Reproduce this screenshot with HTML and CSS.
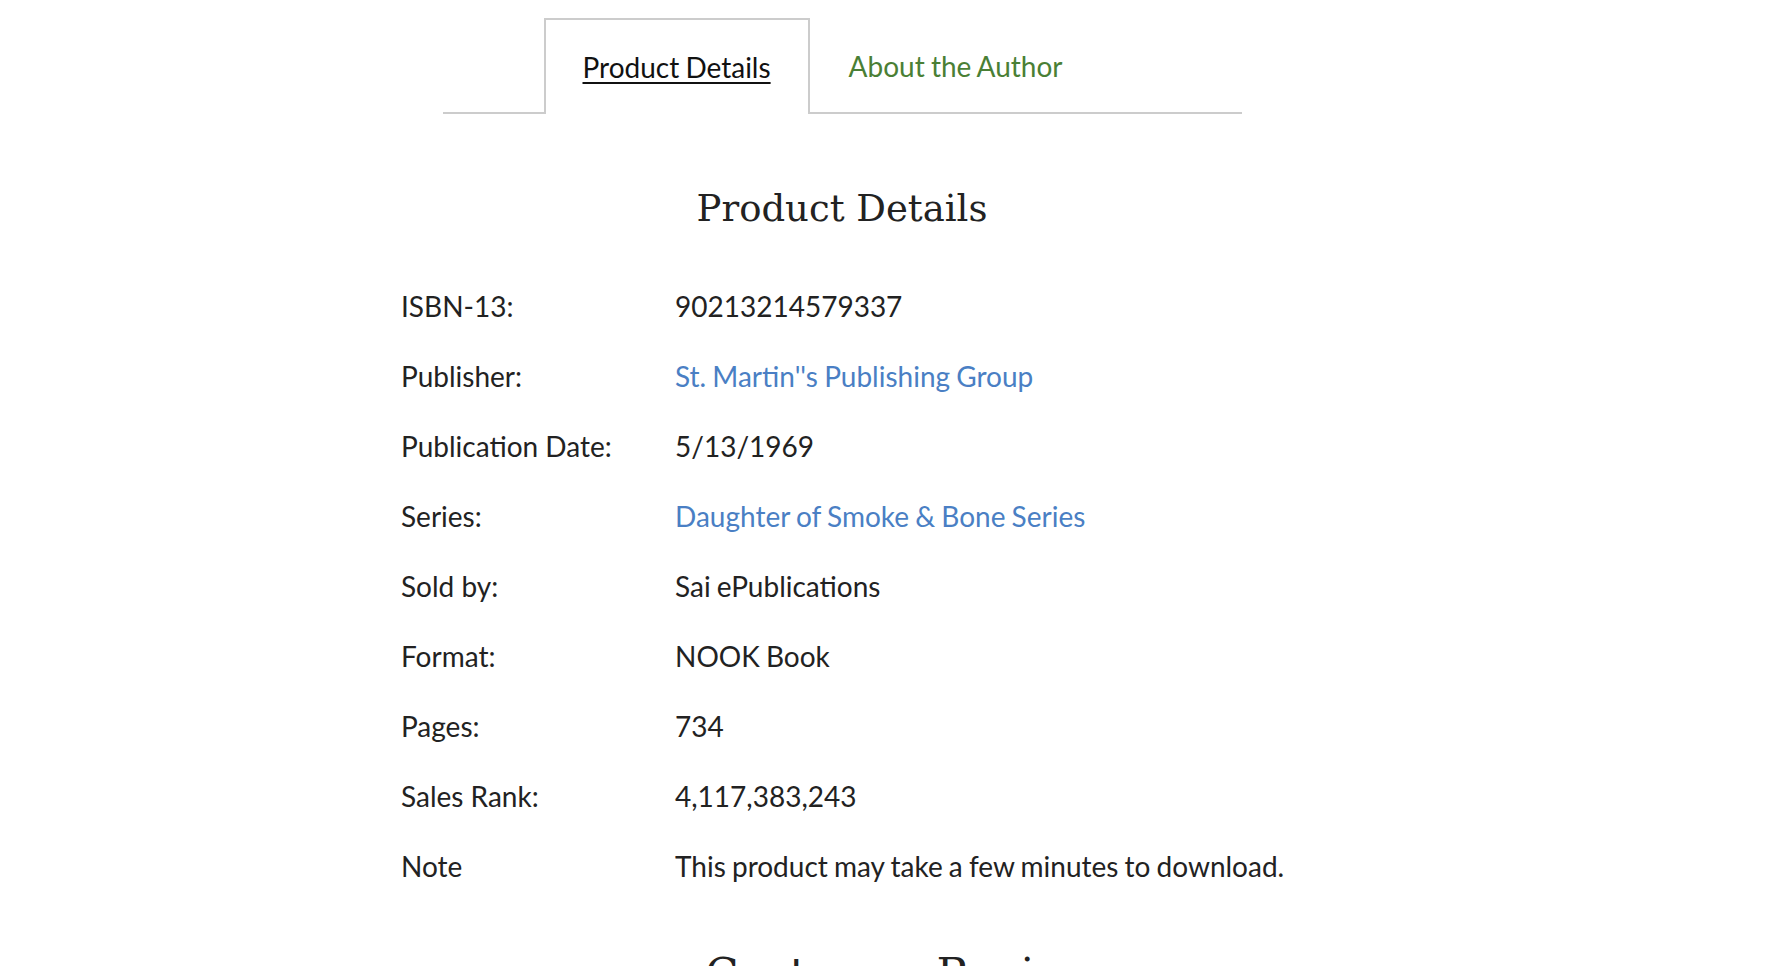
FILE: index.html
```html
<!DOCTYPE html>
<html>
<head>
<meta charset="utf-8">
<link rel="stylesheet" href="styles.css">
</head>
<body>
<div class="page">
  <nav class="tabs">
    <div class="tab-spacer"></div>
    <a class="tab active" href="#">Product Details</a>
    <a class="tab" href="#">About the Author</a>
  </nav>
  <section class="details">
    <h2 class="title">Product Details</h2>
    <dl class="grid">
      <dt>ISBN-13:</dt><dd>90213214579337</dd>
      <dt>Publisher:</dt><dd><a class="link" href="#">St. Martin''s Publishing Group</a></dd>
      <dt>Publication Date:</dt><dd>5/13/1969</dd>
      <dt>Series:</dt><dd><a class="link" href="#">Daughter of Smoke &amp; Bone Series</a></dd>
      <dt>Sold by:</dt><dd>Sai ePublications</dd>
      <dt>Format:</dt><dd>NOOK Book</dd>
      <dt>Pages:</dt><dd>734</dd>
      <dt>Sales Rank:</dt><dd>4,117,383,243</dd>
      <dt>Note</dt><dd>This product may take a few minutes to download.</dd>
    </dl>
    <h2 class="title reviews">Customer Reviews</h2>
  </section>
</div>
</body>
</html>
```
FILE: styles.css
```css
html, body {
  margin: 0;
  padding: 0;
  background: #fff;
}
body {
  font-family: Lato, "Open Sans", sans-serif;
  color: #222;
  overflow: hidden;
  padding-right: 92px;
}
.page {
  width: 882px;
  margin: 0 auto;
}
.tabs {
  display: flex;
  width: 799px;
  margin: 18px auto 0;
  border-bottom: 2px solid #ccc;
  box-sizing: border-box;
  height: 96px;
}
.tab-spacer {
  width: 101px;
}
.tab {
  display: flex;
  align-items: center;
  padding: 0 37px;
  font-size: 28px;
  color: #4a7f35;
  text-decoration: none;
  word-spacing: -1px;
  border: 2px solid transparent;
  border-bottom: none;
}
.tab.active {
  color: #111;
  text-decoration: underline;
  text-decoration-thickness: 2px;
  text-underline-offset: 4px;
  border-color: #ccc;
  margin-bottom: -2px;
  background: #fff;
}
.details {
  padding-top: 74px;
}
.title {
  margin: 0;
  text-align: center;
  font-family: "DejaVu Serif", Georgia, serif;
  font-weight: normal;
  font-size: 37px;
  line-height: 1.15;
  color: #222;
}
.grid {
  display: grid;
  grid-template-columns: 274px 1fr;
  margin: 40px 0 0 0;
  font-size: 28px;
}
.grid dt, .grid dd {
  margin: 0;
  height: 70px;
  line-height: 70px;
  white-space: nowrap;
}
.grid dd {
  word-spacing: -1px;
}
.link {
  color: #4a7fc4;
  text-decoration: none;
}
.reviews {
  margin-top: 49px;
  font-size: 44px;
  padding-left: 142px;
  white-space: nowrap;
}
```
